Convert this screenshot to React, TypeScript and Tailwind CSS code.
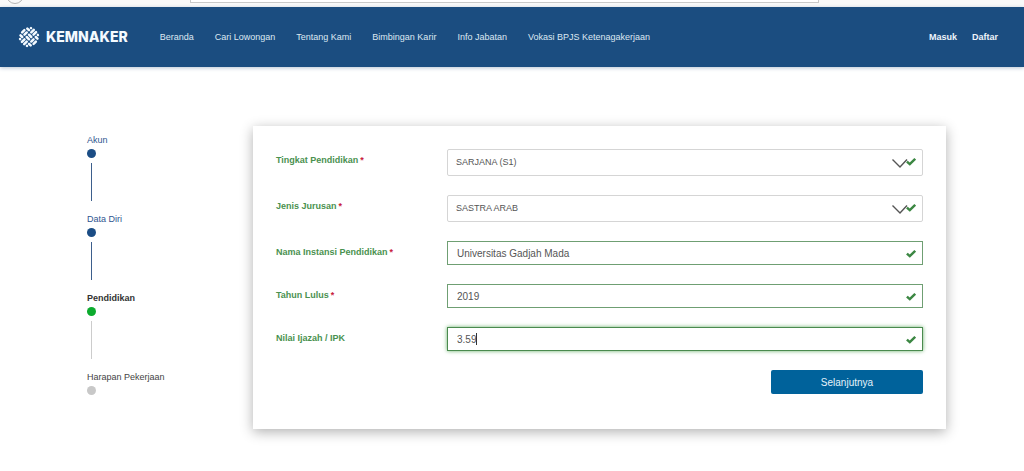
const menu = ['Beranda', 'Cari Lowongan', 'Tentang Kami', 'Bimbingan Karir', 'Info Jabatan', 'Vokasi BPJS Ketenagakerjaan'];

const steps = [
  { label: 'Akun', text: 'text-[#2f5590]', dot: 'bg-[#1b4d85]', line: 'bg-[#3d5f8c]' },
  { label: 'Data Diri', text: 'text-[#2f5590]', dot: 'bg-[#1b4d85]', line: 'bg-[#3d5f8c]' },
  { label: 'Pendidikan', text: 'font-bold text-[#333333]', dot: 'bg-[#0cab2e]', line: 'bg-[#cccccc]' },
  { label: 'Harapan Pekerjaan', text: 'text-[#444444]', dot: 'bg-[#c8c8c8]', line: '' },
];

type Field = {
  id: string;
  label: string;
  value: string;
  required?: boolean;
  select?: boolean;
  focus?: boolean;
};

const fields: Field[] = [
  { id: 'tingkat', label: 'Tingkat Pendidikan', value: 'SARJANA (S1)', required: true, select: true },
  { id: 'jurusan', label: 'Jenis Jurusan', value: 'SASTRA ARAB', required: true, select: true },
  { id: 'instansi', label: 'Nama Instansi Pendidikan', value: 'Universitas Gadjah Mada', required: true },
  { id: 'tahun', label: 'Tahun Lulus', value: '2019', required: true },
  { id: 'nilai', label: 'Nilai Ijazah / IPK', value: '3.59', focus: true },
];

function Logo() {
  return (
    <svg viewBox="-12 -12 24 24" className="size-6" aria-hidden="true">
      <g transform="rotate(45)" stroke="#f4faff" strokeWidth="2.5" strokeLinecap="round">
        <path d="M-1.6 -1.6H1.6M-1.6 1.6H1.6" />
        <path d="M-1.6 -8.4V-4.8M1.6 -8.4V-4.8M-1.6 8.4V4.8M1.6 8.4V4.8" />
        <path d="M-4.8 -1.6V1.6M-8.1 -1.6V1.6M4.8 -1.6V1.6M8.1 -1.6V1.6" />
        <path d="M-7.2 -4.8H-4.8M7.2 -4.8H4.8M-7.2 4.8H-4.8M7.2 4.8H4.8" />
        <path d="M-4.9 -7.7H-4.8M4.9 -7.7H4.8M-4.9 7.7H-4.8M4.9 7.7H4.8" />
      </g>
    </svg>
  );
}

function FormField({ id, label, value, required, select, focus }: Field) {
  return (
    <div className="flex items-start">
      <label htmlFor={id} className="w-[171px] shrink-0 pt-[5px] text-[9px] leading-3 font-bold text-[#4a914f]">
        {label}
        {required && <span className="ml-0.5 text-[#c8203c]">*</span>}
      </label>
      <div className="relative flex-1">
        {select ? (
          <select
            id={id}
            defaultValue={value}
            className="block h-[27px] w-full appearance-none rounded-xs border border-[#d5d5d5] bg-white px-2 text-[9px] text-[#555555]"
          >
            <option>{value}</option>
          </select>
        ) : (
          <input
            id={id}
            type="text"
            defaultValue={value}
            autoFocus={focus}
            className="block h-6 w-full border border-[#6f9f73] bg-white px-[9px] text-[10px] text-[#555555] caret-transparent outline-none focus:border-[#4a8a4e] focus:shadow-[0_0_4px_#67b168]"
          />
        )}
        {focus && <span className="pointer-events-none absolute top-1.5 left-[29px] h-3 w-px bg-[#333333]" />}
        {select && (
          <svg viewBox="0 0 16 9" className="pointer-events-none absolute top-[10px] right-[15px] h-[9px] w-4" fill="none" stroke="#555555" strokeWidth="1.4">
            <path d="M0.5 0.5L8 8L15 0.5" />
          </svg>
        )}
        <svg viewBox="0 0 10 10" className="pointer-events-none absolute top-2 right-[7px] size-[10px]" fill="none" stroke="#3c8743" strokeWidth="2.5">
          <path d="M0.9 4.6L3.8 7.1L9.2 1.8" />
        </svg>
      </div>
    </div>
  );
}

export default function App() {
  return (
    <div className="min-h-screen bg-white font-['Liberation_Sans',Arial,sans-serif]">
      {/* bottom edge of the browser toolbar */}
      <div className="flex h-[7px] overflow-hidden bg-[#f9f9f9] pl-1.5">
        <div className="-mt-[14px] size-[18px] shrink-0 rounded-full border border-[#b5b5b5]" />
        <div className="mr-[205px] ml-[166px] h-[3px] flex-1 border border-t-0 border-[#c9c9c9] bg-white" />
      </div>

      <header className="flex h-[60px] items-center bg-[#1b4d80] pr-[26px] pl-[17px] shadow-[0_1px_4px_#b8c4d4]">
        <a href="#" className="flex items-center gap-[5px] font-['Inter',sans-serif] text-sm font-extrabold text-[#f4faff]">
          <Logo />
          KEMNAKER
        </a>
        <nav className="ml-8 flex gap-[21px] pt-0.5 text-[9px] text-[#dde8f2]">
          {menu.map((item) => (
            <a key={item} href="#">{item}</a>
          ))}
        </nav>
        <div className="ml-auto flex gap-[15px] pt-0.5 text-[9px] font-bold text-[#eef4fa]">
          <a href="#">Masuk</a>
          <a href="#">Daftar</a>
        </div>
      </header>

      <main className="flex items-start pt-[59px] pr-[78px] pb-10 pl-[87px]">
        <ol className="w-[166px] shrink-0 pt-[7px]">
          {steps.map((step) => (
            <li key={step.label}>
              <p className={`text-[9px] leading-[14px] ${step.text}`}>{step.label}</p>
              <div className={`mt-0.5 size-[9px] rounded-full ${step.dot}`} />
              {step.line && <div className={`mt-[5px] mb-[11px] ml-1 h-[38px] w-px ${step.line}`} />}
            </li>
          ))}
        </ol>

        <form className="flex flex-1 flex-col gap-[19px] bg-white px-[23px] pt-[23px] pb-[35px] shadow-[0_3px_12px_#b0b0b0]">
          {fields.map((field) => (
            <FormField key={field.id} {...field} />
          ))}
          <button type="button" className="h-6 w-[152px] self-end rounded-xs bg-[#00629b] text-[10px] text-[#e6f2fa]">
            Selanjutnya
          </button>
        </form>
      </main>
    </div>
  );
}
